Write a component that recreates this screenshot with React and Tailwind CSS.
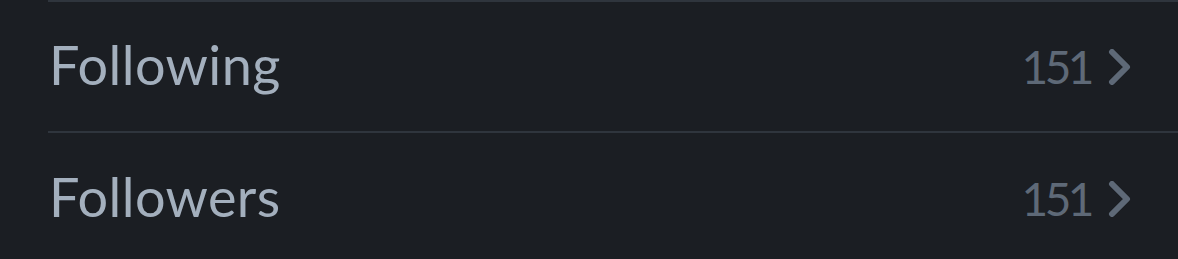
const rows = [
  { label: "Following", count: 151 },
  { label: "Followers", count: 151 },
];

const Chevron = () => (
  <svg width="24" height="36" viewBox="0 0 24 36" fill="none" className="shrink-0">
    <path d="M4 3 L19 18 L4 33" stroke="#5e6977" strokeWidth="6" strokeLinecap="round" strokeLinejoin="round" />
  </svg>
);

export default function App() {
  return (
    <div className="w-[1178px] h-[259px] overflow-hidden bg-[#1b1e23] font-['Lato',sans-serif]">
      <div className="ml-[48px] border-t-[2px] border-[#2f353d]">
        {rows.map((row, i) => (
          <div
            key={row.label}
            className={`flex items-center justify-between h-[131px] pr-[46px] ${
              i === 0 ? "border-b-[2px] border-[#2f353d]" : ""
            }`}
          >
            <span className="text-[54px] leading-none text-[#a3afbd] pl-[1px] tracking-[0.4px] -mt-[4px]">
              {row.label}
            </span>
            <div className="flex items-center gap-[17px]">
              <span className="text-[46px] leading-none text-[#5e6977] tracking-[-3.5px]">{row.count}</span>
              <Chevron />
            </div>
          </div>
        ))}
      </div>
    </div>
  );
}
